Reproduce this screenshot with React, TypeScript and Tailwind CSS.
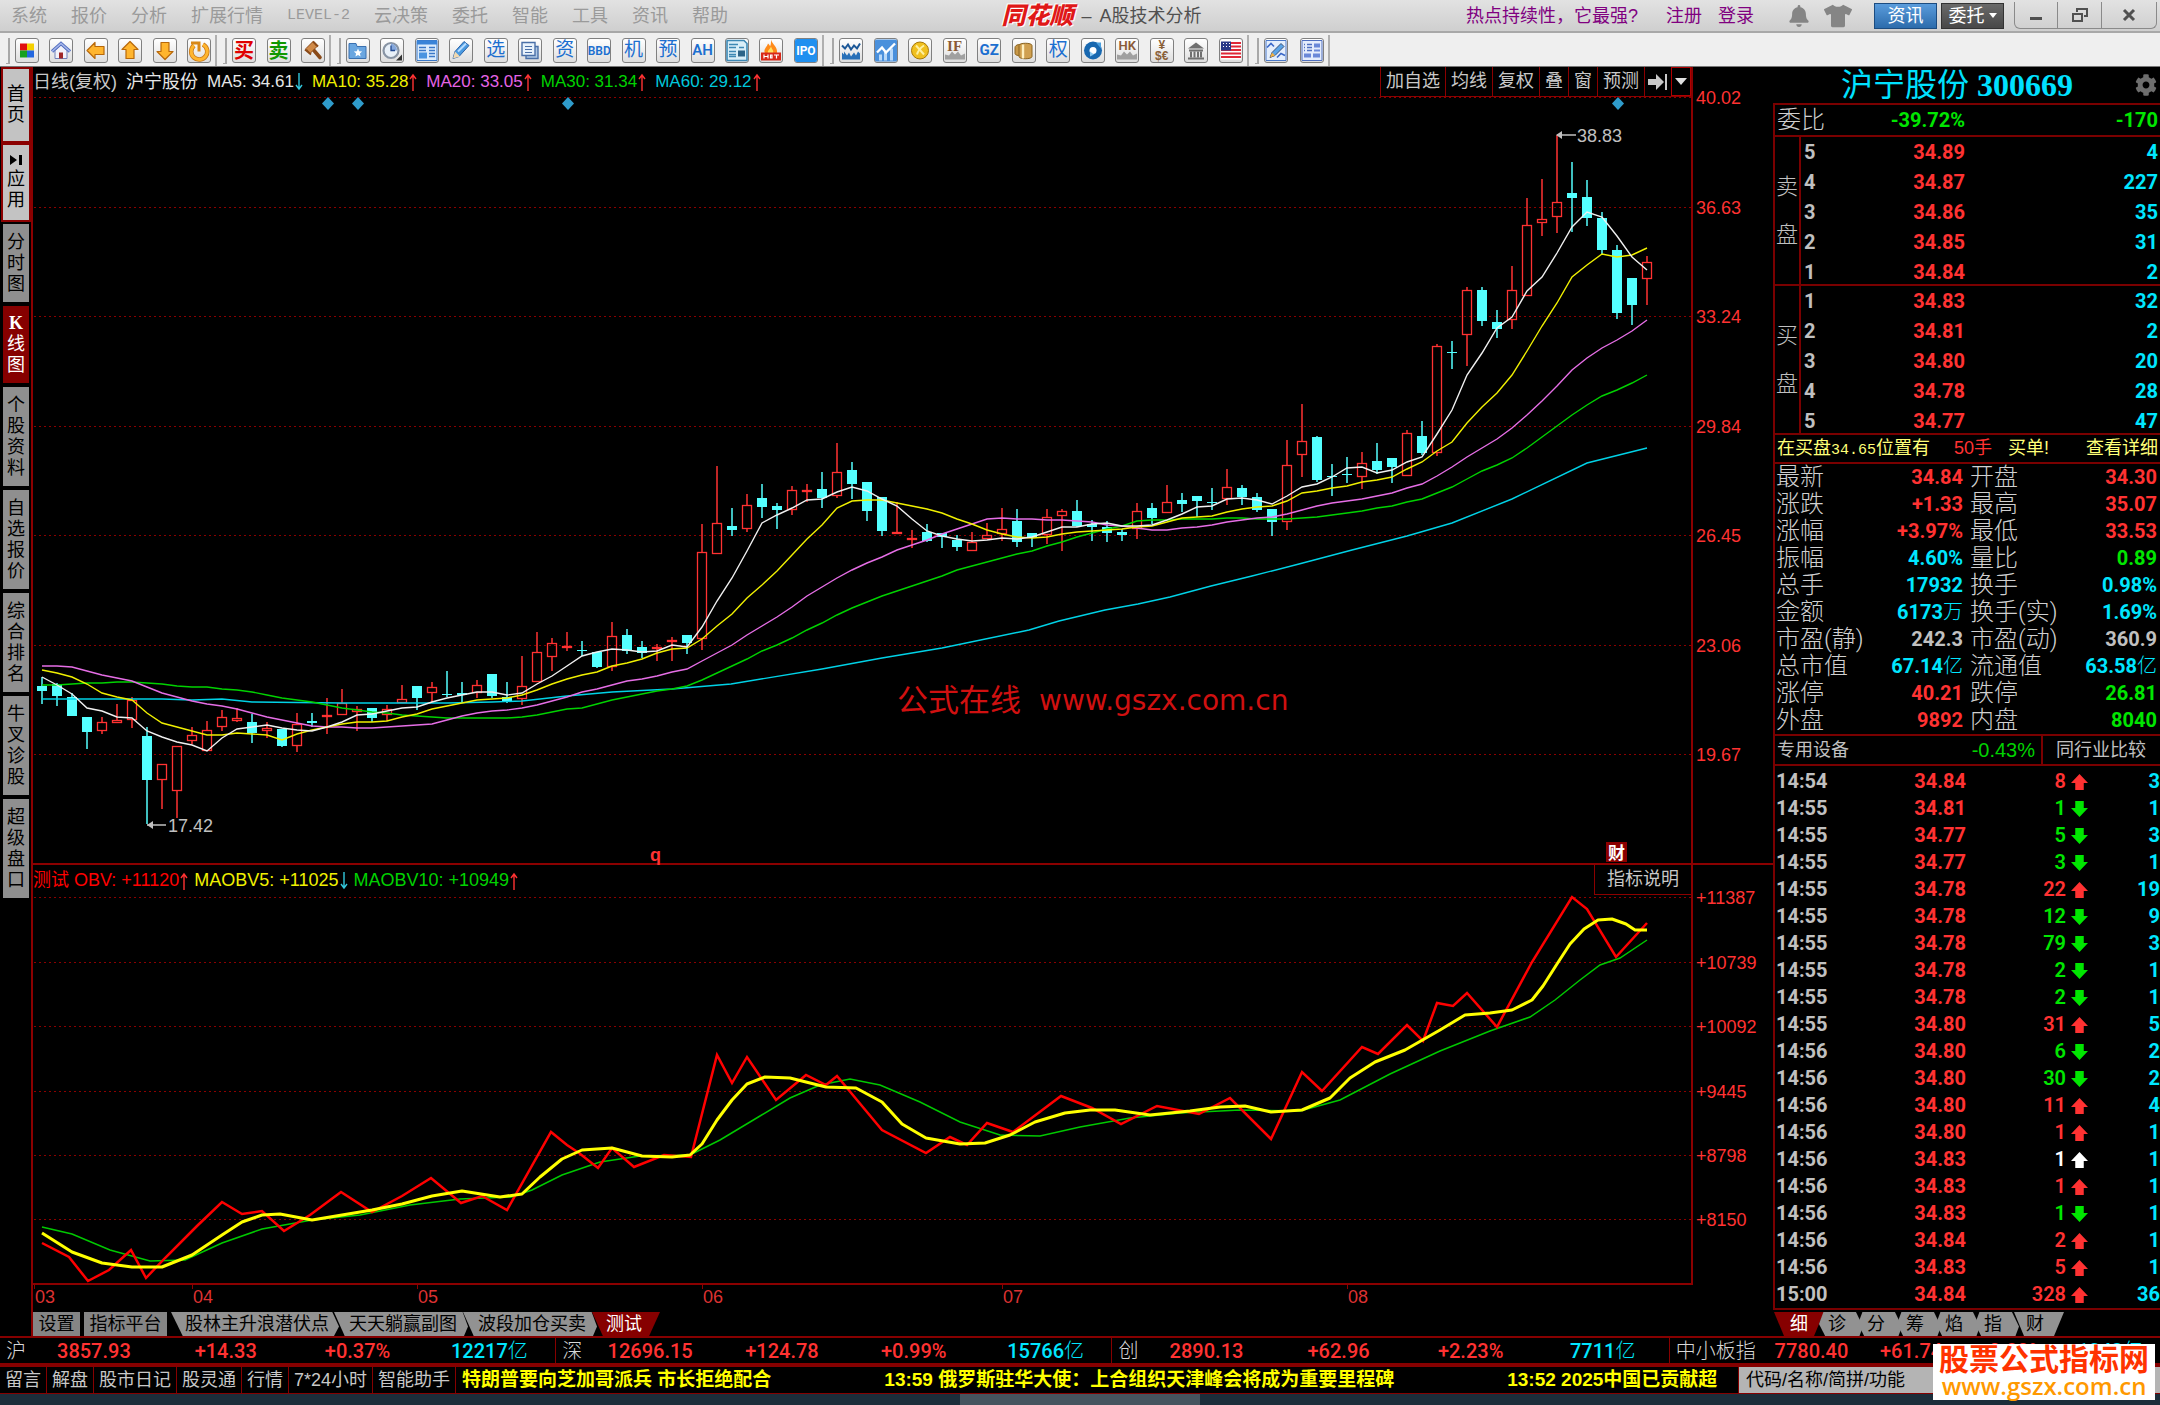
import React from 'react';
import { FaBell, FaTshirt, FaCog } from 'react-icons/fa';

const MENU = ['系统', '报价', '分析', '扩展行情', 'LEVEL-2', '云决策', '委托', '智能', '工具', '资讯', '帮助'];

const SIDE_TABS = [
    { text: '首页', h: 'h-[76px]', tone: 'bg-[#c3c3c3] text-black border-[#8b0000]' },
    { text: '应用', h: 'h-[79px]', tone: 'bg-[#c3c3c3] text-black border-[#8b0000]' },
    { text: '分时图', h: 'h-[82px]', tone: 'bg-[#8f8f8f] text-black border-black' },
    { text: '线图', h: 'h-[81px]', tone: 'bg-[#860000] text-white border-black' },
    { text: '个股资料', h: 'h-[103px]', tone: 'bg-[#8f8f8f] text-black border-black' },
    { text: '自选报价', h: 'h-[103px]', tone: 'bg-[#8f8f8f] text-black border-black' },
    { text: '综合排名', h: 'h-[103px]', tone: 'bg-[#8f8f8f] text-black border-black' },
    { text: '牛叉诊股', h: 'h-[103px]', tone: 'bg-[#8f8f8f] text-black border-black' },
    { text: '超级盘口', h: 'h-[103px]', tone: 'bg-[#8f8f8f] text-black border-black' },
];

// up flag, high, body top, body bottom, low (chart y units)
const CANDLES = [
    [0, 677, 686, 691, 704], [0, 683, 684, 696, 706], [0, 693, 697, 716, 716], [0, 717, 717, 732, 749],
    [1, 717, 722, 731, 734], [1, 704, 720, 723, 723], [1, 697, 700, 720, 728], [0, 727, 736, 780, 824],
    [1, 764, 764, 780, 809], [1, 746, 746, 791, 818], [1, 727, 735, 741, 744], [1, 721, 730, 751, 751],
    [1, 710, 717, 727, 731], [1, 708, 718, 721, 722], [0, 714, 722, 733, 743], [1, 722, 728, 731, 738],
    [0, 729, 729, 746, 747], [1, 713, 724, 746, 752], [0, 713, 721, 723, 727], [1, 698, 715, 716, 734],
    [1, 689, 703, 715, 715], [1, 706, 709, 712, 731], [0, 708, 708, 718, 722], [1, 705, 709, 715, 721],
    [1, 685, 699, 703, 703], [0, 686, 686, 698, 710], [1, 682, 687, 693, 702], [0, 671, 694, 695, 697],
    [0, 682, 693, 695, 702], [1, 680, 685, 693, 698], [0, 674, 674, 696, 698], [0, 682, 697, 702, 703],
    [1, 656, 686, 699, 705], [1, 632, 652, 682, 682], [1, 638, 643, 657, 671], [1, 632, 646, 648, 651],
    [0, 641, 650, 651, 656], [0, 652, 652, 667, 668], [1, 622, 636, 667, 671], [0, 629, 635, 651, 654],
    [0, 641, 647, 653, 658], [1, 644, 647, 648, 661], [1, 637, 640, 642, 661], [0, 635, 635, 643, 654],
    [1, 524, 552, 639, 650], [1, 466, 523, 554, 554], [0, 508, 526, 530, 536], [1, 494, 505, 529, 532],
    [0, 484, 498, 507, 518], [0, 503, 506, 510, 529], [1, 486, 490, 510, 515], [1, 484, 490, 492, 502],
    [0, 472, 489, 498, 508], [1, 443, 472, 496, 498], [0, 462, 470, 484, 499], [0, 482, 482, 511, 521],
    [0, 497, 497, 531, 536], [1, 502, 532, 533, 533], [1, 530, 538, 539, 548], [0, 524, 532, 541, 542],
    [0, 533, 533, 537, 548], [0, 535, 540, 547, 551], [1, 532, 542, 551, 551], [1, 523, 535, 539, 539],
    [1, 508, 529, 534, 541], [0, 509, 521, 542, 547], [0, 533, 533, 538, 547], [1, 509, 517, 535, 544],
    [1, 509, 511, 516, 551], [0, 500, 511, 526, 527], [0, 520, 524, 527, 541], [0, 521, 527, 533, 542],
    [0, 529, 532, 535, 541], [1, 503, 511, 529, 539], [0, 503, 508, 518, 524], [1, 485, 502, 513, 513],
    [0, 493, 500, 504, 512], [0, 496, 496, 501, 517], [0, 488, 502, 503, 510], [1, 469, 487, 499, 505],
    [0, 485, 488, 497, 505], [0, 493, 497, 510, 512], [0, 509, 509, 522, 536], [1, 440, 465, 522, 530],
    [1, 404, 441, 455, 477], [0, 436, 437, 480, 482], [0, 464, 476, 477, 496], [0, 457, 474, 475, 483],
    [1, 452, 463, 477, 489], [0, 443, 461, 470, 474], [0, 458, 458, 467, 483], [1, 430, 433, 476, 476],
    [0, 421, 436, 453, 455], [1, 344, 346, 453, 456], [0, 341, 352, 353, 369], [1, 287, 290, 335, 366],
    [0, 287, 290, 321, 326], [0, 310, 322, 329, 338], [1, 266, 290, 320, 329], [1, 198, 225, 296, 296],
    [1, 179, 219, 223, 236], [1, 135, 202, 217, 233], [0, 162, 193, 198, 232], [0, 180, 197, 218, 226],
    [0, 212, 218, 250, 254], [0, 245, 250, 313, 319], [0, 278, 278, 305, 325], [1, 256, 262, 279, 305],
];

const barX = (i: number) => Math.round(41.6 + i * 15);
const closes = CANDLES.map(([up, , top, bottom]) => (up ? top : bottom));

// moving average of the closes, with the bars before the window is full given by hand
const average = (n: number, seed: number[]) =>
    closes
        .map((_, i) => {
            const y = i < seed.length ? seed[i] : closes.slice(i - n + 1, i + 1).reduce((a, b) => a + b, 0) / n;
            return `${barX(i)},${Math.round(y)}`;
        })
        .join(' ');

const MA5 = average(5, [677, 685, 694, 708]);
const MA10 = average(10, [670, 673, 677, 684, 693, 697, 700, 713, 723]);
const MA20 = average(20, [666, 666, 667, 671, 675, 678, 681, 687, 693, 697, 701, 704, 706, 709, 713, 717, 720, 723, 726]);
const MA30 = average(30, [685, 685, 684, 683, 683, 682, 682, 683, 684, 686, 687, 687, 689, 690, 692, 695, 698, 700, 702, 705, 708, 710, 712, 713, 715, 716, 717, 718, 718]);
const MA60 = '42,699 162,699 192,700 222,699 252,702 342,703 447,703 492,702 522,701 567,696 612,692 672,689 731,684 822,669 882,658 942,648 1029,630 1059,621 1105,610 1138,604 1170,597 1211,586 1252,576 1299,564 1352,550 1407,536 1452,523 1512,499 1587,463 1647,448';

const OBV = '42,1243 69,1257 88,1281 109,1270 131,1250 146,1278 165,1258 197,1226 222,1202 242,1214 262,1211 284,1231 310,1215 341,1192 372,1212 402,1196 431,1178 461,1203 482,1196 507,1210 551,1132 567,1145 579,1153 598,1168 612,1148 634,1167 664,1155 691,1157 717,1055 732,1083 747,1057 776,1100 806,1075 826,1085 837,1076 882,1130 926,1153 950,1137 967,1145 987,1123 1013,1132 1061,1096 1092,1108 1121,1124 1157,1106 1199,1114 1230,1098 1271,1139 1302,1072 1322,1091 1362,1047 1378,1054 1407,1025 1423,1041 1437,1003 1453,1006 1467,993 1497,1027 1532,962 1572,897 1587,909 1616,957 1647,923';
const MAOBV5 = '42,1233 72,1252 102,1263 132,1267 162,1267 192,1255 222,1235 242,1222 262,1215 280,1214 312,1220 342,1215 372,1210 402,1204 432,1196 462,1191 500,1197 522,1194 540,1177 562,1159 582,1150 612,1148 642,1156 672,1157 690,1155 702,1144 717,1120 732,1100 747,1084 765,1077 790,1078 826,1087 856,1088 882,1102 902,1124 926,1138 960,1144 985,1143 1010,1135 1035,1122 1065,1113 1090,1110 1115,1110 1150,1115 1190,1111 1220,1107 1245,1106 1271,1112 1302,1110 1330,1098 1350,1078 1375,1062 1405,1050 1440,1030 1465,1015 1490,1013 1512,1010 1532,1000 1543,986 1557,964 1570,944 1584,929 1598,920 1612,919 1626,924 1635,930 1647,930';
const MAOBV10 = '42,1227 72,1234 110,1250 150,1261 185,1260 222,1243 262,1229 312,1220 360,1215 410,1205 460,1199 512,1197 532,1190 562,1175 600,1162 640,1156 690,1155 720,1140 760,1116 790,1098 820,1085 850,1079 880,1085 920,1102 960,1122 1000,1135 1040,1136 1080,1127 1130,1118 1180,1113 1240,1110 1300,1111 1340,1100 1390,1074 1440,1051 1490,1031 1530,1017 1555,1000 1580,980 1600,965 1620,958 1647,940';

const PRICE_GRID = [
    [97, '40.02'], [207, '36.63'], [316, '33.24'], [426, '29.84'], [535, '26.45'], [645, '23.06'], [754, '19.67'],
] as const;
const OBV_GRID = [
    [897, '+11387'], [962, '+10739'], [1026, '+10092'], [1091, '+9445'], [1155, '+8798'], [1219, '+8150'],
] as const;
const MONTHS = [[34, '03'], [192, '04'], [417, '05'], [702, '06'], [1002, '07'], [1347, '08']] as const;

const SELLS = [['5', '34.89', '4'], ['4', '34.87', '227'], ['3', '34.86', '35'], ['2', '34.85', '31'], ['1', '34.84', '2']];
const BUYS = [['1', '34.83', '32'], ['2', '34.81', '2'], ['3', '34.80', '20'], ['4', '34.78', '28'], ['5', '34.77', '47']];

const RED = 'text-[#ff3232]';
const GREEN = 'text-[#00e600]';
const CYAN = 'text-[#00e6ff]';
const GRAY = 'text-[#c0c0c0]';

const STATS = [
    ['最新', '34.84', RED, '开盘', '34.30', RED],
    ['涨跌', '+1.33', RED, '最高', '35.07', RED],
    ['涨幅', '+3.97%', RED, '最低', '33.53', RED],
    ['振幅', '4.60%', CYAN, '量比', '0.89', GREEN],
    ['总手', '17932', CYAN, '换手', '0.98%', CYAN],
    ['金额', '6173万', CYAN, '换手(实)', '1.69%', CYAN],
    ['市盈(静)', '242.3', GRAY, '市盈(动)', '360.9', GRAY],
    ['总市值', '67.14亿', CYAN, '流通值', '63.58亿', CYAN],
    ['涨停', '40.21', RED, '跌停', '26.81', GREEN],
    ['外盘', '9892', RED, '内盘', '8040', GREEN],
];

const TRADES = [
    ['14:54', '34.84', '8', 'up', '3'], ['14:55', '34.81', '1', 'down', '1'], ['14:55', '34.77', '5', 'down', '3'],
    ['14:55', '34.77', '3', 'down', '1'], ['14:55', '34.78', '22', 'up', '19'], ['14:55', '34.78', '12', 'down', '9'],
    ['14:55', '34.78', '79', 'down', '3'], ['14:55', '34.78', '2', 'down', '1'], ['14:55', '34.78', '2', 'down', '1'],
    ['14:55', '34.80', '31', 'up', '5'], ['14:56', '34.80', '6', 'down', '2'], ['14:56', '34.80', '30', 'down', '2'],
    ['14:56', '34.80', '11', 'up', '4'], ['14:56', '34.80', '1', 'up', '1'], ['14:56', '34.83', '1', 'flat', '1'],
    ['14:56', '34.83', '1', 'up', '1'], ['14:56', '34.83', '1', 'down', '1'], ['14:56', '34.84', '2', 'up', '1'],
    ['14:56', '34.83', '5', 'up', '1'], ['15:00', '34.84', '328', 'up', '36'],
];
const TRADE_TONE: Record<string, string> = { up: RED, down: GREEN, flat: 'text-white' };

const INDEXES = [
    { name: '沪', cells: ['3857.93', '+14.33', '+0.37%', '12217亿'], grow: 'flex-[556]', label: 'w-[28px]' },
    { name: '深', cells: ['12696.15', '+124.78', '+0.99%', '15766亿'], grow: 'flex-[556]', label: 'w-[28px]' },
    { name: '创', cells: ['2890.13', '+62.96', '+2.23%', '7711亿'], grow: 'flex-[557]', label: 'w-[28px]' },
    { name: '中小板指', cells: ['7780.40', '+61.74', '+0.80%', '1243亿'], grow: 'flex-[491]', label: 'w-[92px]' },
];

const FOOT_LINKS = ['留言', '解盘', '股市日记', '股灵通', '行情', '7*24小时', '智能助手'];

const Glyph = ({ text, className }: { text: string; className: string }) => (
    <span className={`flex h-full w-full items-center justify-center ${className}`}>{text}</span>
);

const Ico = ({ children }: { children: React.ReactNode }) => (
    <svg viewBox="0 0 22 22" className="h-full w-full" fill="none">{children}</svg>
);

// figures are bold, the unit after them is thin
const Figure = ({ value }: { value: string }) => {
    const unit = value.match(/[万亿]$/);
    if (!unit) return <>{value}</>;
    return <>{value.slice(0, -1)}<span className="font-light">{unit[0]}</span></>;
};

const HAN = 'text-[19px] text-[#1c6fd0]';
const ARROW = { fill: '#ffb52e', stroke: '#b8680a', strokeWidth: 1.2, strokeLinejoin: 'round' as const };

const TOOLS = [
    {
        width: 'w-[196px]',
        items: [
            ['板块', <Ico><path d="M4 4h7v7H4z" fill="#e01010" /><path d="M11 4h7v7h-7z" fill="#f5d000" /><path d="M4 11h7v7H4z" fill="#18a020" /><path d="M11 11h7v7h-7z" fill="#2468e0" /></Ico>],
            ['主页', <Ico><path d="M5 11v8h12v-8l-6-6z" fill="#f2f2fa" stroke="#7080b8" /><path d="M2 12 11 4l9 8" stroke="#5570c0" strokeWidth="3.4" /><path d="M2 12 11 4l9 8" stroke="#a8b8ec" strokeWidth="1.4" /><path d="M9 13h4v6H9z" fill="#a02828" /></Ico>],
            ['后退', <Ico><path d="M2 11 10 3v4h9v8h-9v4z" {...ARROW} /></Ico>],
            ['上翻', <Ico><path d="M11 2 19 10h-4v9H7v-9H3z" {...ARROW} /></Ico>],
            ['下翻', <Ico><path d="M11 20 19 12h-4V3H7v9H3z" {...ARROW} /></Ico>],
            ['刷新', <Ico><path d="M15 5a8 8 0 1 1-9 1" stroke="#c87818" strokeWidth="4.600" /><path d="M15 5a8 8 0 1 1-9 1" stroke="#ffb52e" strokeWidth="3" /><path d="M11 12V3.500H3" stroke="#d88818" strokeWidth="3" /></Ico>],
        ],
    },
    {
        width: 'w-[93px]',
        items: [
            ['买入', <Glyph text="买" className="text-[20px] font-bold text-[#e00000]" />],
            ['卖出', <Glyph text="卖" className="text-[20px] font-bold text-[#109800]" />],
            ['委托锤', <Ico><path d="m12 11 6 7" stroke="#8a4a18" strokeWidth="3.600" strokeLinecap="round" /><path d="m4 9 7-7 4 5-7 7z" fill="#d08a48" stroke="#8a4a18" /><path d="m3 10 6 5M11 2l5 5" stroke="#8a4a18" strokeWidth="2" /></Ico>],
        ],
    },
    {
        width: 'w-[472px]',
        items: [
            ['自选', <Ico><path d="M2 4h7l1 3h9v12H2z" fill="#6aa6e0" stroke="#3a70b0" /><path d="m11 9 1.200 2.800 3 .2-2.300 2 .7 3-2.600-1.600L8.400 17l.7-3-2.300-2 3-.2z" fill="#fff" /></Ico>],
            ['历史', <Ico><circle cx="10" cy="11" r="7.500" fill="#e8f0f8" stroke="#8894a4" strokeWidth="2.200" /><path d="M10 11V4a7 7 0 0 1 6 7z" fill="#86a8dc" /><path d="M10 6v5h4" stroke="#204890" strokeWidth="1.300" /><path d="M15 21h6v-6z" fill="#333" /></Ico>],
            ['报表', <Ico><path d="M1 1h20v20H1z" fill="#dcecfc" stroke="#3a78c8" /><path d="M1 1h20v4H1z" fill="#3a84d8" /><path d="M3 8h7M3 11h7M13 8h6M13 11h6M13 14h6M13 17h6" stroke="#3a78c8" strokeWidth="1.600" /><path d="M3 13h8v6H3z" fill="#4a94e0" /></Ico>],
            ['画线', <Ico><path d="m3 19 2-7L14 2l5 4-10 11z" fill="#4a9ae0" stroke="#2a62a8" /><path d="m3 19 2-7 5 5z" fill="#f0d8b0" /><path d="m8 12 8-8" stroke="#b8dcff" strokeWidth="2" /></Ico>],
            ['选股', <Glyph text="选" className={HAN} />],
            ['多窗', <Ico><path d="M7 7h12v12H7z" fill="#b0c8e4" stroke="#4a70a8" strokeWidth="1.400" /><path d="M3 3h13v13H3z" fill="#e8f2fc" stroke="#4a70a8" strokeWidth="1.400" /><path d="M6 7h7M6 10h7M6 13h7" stroke="#4a70a8" /></Ico>],
            ['资金', <Glyph text="资" className={HAN} />],
            ['大单', <Glyph text="BBD" className="font-['Roboto'] text-[12px] font-semibold text-[#1c6fd0]" />],
            ['机构', <Glyph text="机" className={HAN} />],
            ['预测', <Glyph text="预" className={HAN} />],
            ['AH股', <Glyph text="AH" className="font-['Roboto'] text-[15px] font-semibold text-[#1c6fd0]" />],
            ['新闻', <Ico><path d="M1 1h17l3 3v17H1z" fill="#d8eef8" stroke="#3c88b4" strokeWidth="1.600" /><path d="M3 5h9M3 8h7M13 8h5M3 12h7M3 15h7M3 17h7" stroke="#3c88b4" strokeWidth="1.400" /><path d="M12 11h7v6h-7z" fill="#2c6488" /></Ico>],
            ['热点', <Ico><path d="M11 0c1 5 7 7 6 14H5C3 9 7 8 8 4c1 1 2 2 2 3 1-2 1-4 1-7z" fill="#ff8a18" /><path d="M11 7c1 3 3 4 2 7H8c-1-3 2-4 3-7z" fill="#ffe060" /><path d="M1 13h20v8H1z" fill="#d82818" /><path d="M4 15v4M8 15v4M4 17h4M12 15.500h-1.500v3H12zM14 15.500h5M16.500 15.500V19" stroke="#fff" strokeWidth="1.200" /></Ico>],
            ['新股', <Glyph text="IPO" className="bg-[#2090f0] font-['Roboto'] text-[12px] font-bold text-white" />],
        ],
    },
    {
        width: 'w-[404px]',
        items: [
            ['大盘', <Ico><path d="m2 6 3 3 3-4 3 5 3-4 3 3 3-5" stroke="#1c5898" strokeWidth="2" /><path d="M2 20v-7l2 2v-3l3 4 2-3 2 4 3-4 2 3 2-4 2 2v6z" fill="#2870b8" /></Ico>],
            ['走势', <Ico><path d="M0 0h22v22H0z" fill="#4a90dc" /><path d="M4 21v-6h3v6M9 21v-9h3v9M15 21V9h3v12" fill="#b8d8f8" /><path d="m2 13 5-5 4 5 9-9" stroke="#fff" strokeWidth="2.400" /></Ico>],
            ['期货', <Ico><circle cx="11" cy="11" r="8.500" fill="#f0c020" stroke="#a87808" /><path d="m7 6 8 9M15 6c-3 2-6 5-7 9" stroke="#fff0a0" strokeWidth="2" /></Ico>],
            ['股指', <span className="relative flex h-full w-full justify-center"><Ico><path d="M1 20v-5l4 1 3-4 3 3 3-3 3 4 4-2v6z" fill="#a0a0a0" /></Ico><span className="absolute top-0 font-['Liberation_Serif'] text-[15px] leading-[14px] font-bold text-[#8a5a38]">IF</span></span>],
            ['国债', <Glyph text="GZ" className="font-['Roboto'] text-[15px] font-bold text-[#1c6fd0]" />],
            ['商品', <Ico><path d="M2 8c0-3 6-4 8-2v9c-2 2-8 1-8-1z" fill="#c89848" stroke="#8a6420" /><path d="M6 6c0-3 13-3 13 0v11c0 3-13 3-13 0z" fill="#d0a050" stroke="#8a6420" /><path d="M10 5v14" stroke="#fff0c0" strokeWidth="2.400" /></Ico>],
            ['权证', <Glyph text="权" className={HAN} />],
            ['基金', <Ico><circle cx="11" cy="11" r="9" fill="#1868b0" /><circle cx="11" cy="11" r="3.500" fill="#fff" /><path d="M14 3h5v6" fill="#4aa0e0" /><path d="m8 17 4-2-4-3z" fill="#8ac8f0" /></Ico>],
            ['港股', <span className="relative flex h-full w-full justify-center"><Ico><path d="M1 20v-5l4 1 3-4 3 3 3-3 3 4 4-2v6z" fill="#a0a0a0" /></Ico><span className="absolute top-0 font-['Roboto'] text-[13px] leading-[14px] font-semibold text-[#8a5a38]">HK</span></span>],
            ['外汇', <span className="flex h-full flex-col items-center justify-center font-['Liberation_Sans'] text-[12px] leading-[11px] font-bold text-[#8a6038]"><span>¥</span><span>$€</span></span>],
            ['银行', <Ico><path d="M3 9 11 3l8 6zM4 10h14v2H4zM3 18h16v2H3z" fill="#707070" /><path d="M6 12v6M9.500 12v6M13 12v6M16 12v6" stroke="#707070" strokeWidth="2" /></Ico>],
            ['美股', <Ico><path d="M1 2h20v18H1z" fill="#fff" /><path d="M1 3.500h20M1 7h20M1 10.500h20M1 14h20M1 17.500h20" stroke="#e02838" strokeWidth="1.800" /><path d="M1 2h10v9H1z" fill="#283888" /><path d="M3 4h1M6 4h1M9 4h1M3 7h1M6 7h1M9 7h1" stroke="#fff" /></Ico>],
        ],
    },
    {
        width: 'w-[60px]',
        items: [
            ['编辑公式', <Ico><path d="M1 1h20v20H1z" fill="#e4eefc" stroke="#4a78c8" /><path d="m2 8 4-4 3 3M12 18l4-4 4 2" stroke="#3a68c8" strokeWidth="1.600" /><path d="m5 18 2-5 9-9 3 3-9 9z" fill="#5aa4e8" stroke="#385078" /><path d="m5 18 2-5 3 3z" fill="#f4b040" /></Ico>],
            ['版面', <Ico><path d="M1 1h20v20H1z" fill="#e4ecfc" stroke="#5070c0" /><path d="M3 5h1M6 5h5M3 8h1M6 8h5M3 11h1M6 11h5" stroke="#5070c0" strokeWidth="1.600" /><path d="M13 4h6v4h-6zM13 10h6v2h-6zM3 14h7v4H3zM12 14h7v4h-7z" fill="#6a88d8" /></Ico>],
        ],
    },
];

const Trend = ({ up }: { up: boolean }) => (
    <svg viewBox="0 0 8 18" className="ml-px h-[18px] w-2" fill="none" stroke={up ? '#ff3232' : '#32c8dc'} strokeWidth="1.4">
        {up ? <path d="M4 18V2M1 6l3-4 3 4" /> : <path d="M4 0v16M1 12l3 4 3-4" />}
    </svg>
);

const TitleBar = () => (
    <header className="flex h-[33px] items-center border-b-2 border-[#a8a8a8] bg-gradient-to-b from-[#e2e2e2] to-[#cfcfcf] text-[18px] leading-[18px] whitespace-nowrap">
        <nav className="flex flex-1 items-center gap-6 pl-[11px] text-[#9a9a9a]">
            {MENU.map((m) => (
                <button key={m} className={m === 'LEVEL-2' ? "font-['Liberation_Mono'] text-[15px]" : ''}>{m}</button>
            ))}
        </nav>
        <div className="flex items-center gap-2 pl-8 text-[#505050]">
            <span className="text-[24px] leading-[28px] font-black text-[#e01818] italic [text-shadow:1px_1px_0_#fff,-1px_-1px_0_#fff]">同花顺</span>
            <span>–</span>
            <h1>A股技术分析</h1>
        </div>
        <div className="flex flex-1 items-center justify-end text-[#800080]">
            <a href="#hot">热点持续性，它最强?</a>
            <a href="#join" className="ml-7">注册</a>
            <a href="#login" className="ml-4">登录</a>
            <button aria-label="消息" className="ml-[34px] text-[#858585]"><FaBell size={22} /></button>
            <button aria-label="换肤" className="ml-[14px] text-[#858585]"><FaTshirt size={28} /></button>
            <button className="ml-[22px] h-[26px] w-[63px] border border-[#1c4c80] bg-gradient-to-b from-[#5a9cdc] to-[#2c6cac] text-white">资讯</button>
            <button className="ml-1 flex h-[26px] w-[63px] items-center justify-center gap-1 border border-[#333] bg-gradient-to-b from-[#6a6a6a] to-[#484848] text-white">
                委托
                <svg viewBox="0 0 8 5" className="h-[5px] w-2"><path d="M0 0h8L4 5z" fill="#fff" /></svg>
            </button>
            <div className="mr-[3px] ml-[10px] flex h-[27px] divide-x divide-[#8a8a8a] rounded-b-md border border-t-0 border-[#8a8a8a]">
                <button aria-label="最小化" className="flex w-[43px] items-center justify-center">
                    <svg viewBox="0 0 16 16" className="size-4"><path d="M2 10h12v3H2z" fill="#505050" /></svg>
                </button>
                <button aria-label="还原" className="flex w-[44px] items-center justify-center">
                    <svg viewBox="0 0 16 16" className="size-4" fill="none" stroke="#505050" strokeWidth="2"><path d="M1 7h9v7H1zM5 5V2h10v7h-3" /></svg>
                </button>
                <button aria-label="关闭" className="flex w-[54px] items-center justify-center">
                    <svg viewBox="0 0 16 16" className="size-4" fill="none" stroke="#505050" strokeWidth="3"><path d="m3 3 10 10M13 3 3 13" /></svg>
                </button>
            </div>
        </div>
    </header>
);

const Toolbar = () => (
    <div className="flex h-[34px] items-end border-b border-[#777] bg-[#efefef]">
        {TOOLS.map((group, i) => (
            <div key={i} className="flex h-[31px] items-center border-r-2 border-[#b0b0b0] pr-[4px]">
                <span className="mr-[5px] ml-[6px] h-[26px] w-[4px] border-r-2 border-b border-[#a8a8a8]" />
                <div className={`flex justify-between ${group.width}`}>
                    {group.items.map(([name, icon]) => (
                        <button
                            key={name as string}
                            aria-label={name as string}
                            className="flex h-[25px] w-6 items-center justify-center overflow-hidden rounded-[3px] border border-[#808080] bg-gradient-to-b from-white to-[#dedede]"
                        >
                            {icon}
                        </button>
                    ))}
                </div>
            </div>
        ))}
    </div>
);

const SideNav = () => (
    <nav className="flex w-[33px] shrink-0 flex-col border-r-2 border-[#8b0000] bg-black pl-px text-[18px]">
        {SIDE_TABS.map((tab) => (
            <button key={tab.text} className={`flex flex-col items-center justify-center border-2 leading-[21px] ${tab.h} ${tab.tone}`}>
                {tab.text === '应用' && (
                    <svg viewBox="0 0 12 10" className="mb-1 h-[10px] w-3"><path d="M0 0v10l7-5zM9 0h3v10H9z" fill="#000" /></svg>
                )}
                {tab.text === '线图' && <span className="font-['Liberation_Serif'] text-[18px] font-bold">K</span>}
                <span className="w-[18px] break-all">{tab.text}</span>
            </button>
        ))}
    </nav>
);

const PriceChart = () => (
    <svg viewBox="33 97 1740 768" className="block w-full overflow-visible font-['Liberation_Sans','Noto_Sans_CJK_SC',sans-serif] text-[18px]" fill="none">
        {PRICE_GRID.map(([y, label]) => (
            <g key={label}>
                <path d={`M34 ${y + 0.5}H1692`} stroke="#8b0000" strokeDasharray="2 3" />
                <text x="1696" y={y + 7} fill="#ff3232">{label}</text>
            </g>
        ))}
        <path d="M1692 97V865M33 864H1773" stroke="#8b0000" strokeWidth="2" />
        {[328, 358, 568, 1618].map((x) => (
            <path key={x} d={`M${x} 97l6 6.500-6 6.500-6-6.500z`} fill="#2f9bcb" />
        ))}
        {CANDLES.map(([up, high, top, bottom, low], i) => {
            const x = barX(i);
            return up ? (
                <g key={i} stroke="#ff3232">
                    <path d={`M${x} ${high}V${top}M${x} ${bottom}V${low}`} strokeWidth="1.500" />
                    <rect x={x - 4.5} y={top + 0.5} width="9" height={Math.max(bottom - top - 1, 1)} strokeWidth="1.300" />
                </g>
            ) : (
                <g key={i}>
                    <path d={`M${x} ${high}V${low}`} stroke="#54ffff" strokeWidth="1.500" />
                    <rect x={x - 5} y={top} width="10" height={bottom - top} fill="#54ffff" />
                </g>
            );
        })}
        <polyline points={MA60} stroke="#00d2e6" strokeWidth="1.400" />
        <polyline points={MA30} stroke="#00d200" strokeWidth="1.400" />
        <polyline points={MA20} stroke="#e66ee6" strokeWidth="1.400" />
        <polyline points={MA10} stroke="#f0f000" strokeWidth="1.400" />
        <polyline points={MA5} stroke="#f0f0f0" strokeWidth="1.400" />
        <path d="M1557 135h19M147 825h19" stroke="#c0c0c0" strokeWidth="1.500" />
        <path d="m1556 135 6-4v8zM147 825l6-4v8z" fill="#c0c0c0" />
        <text x="1577" y="142" fill="#c0c0c0">38.83</text>
        <text x="168" y="832" fill="#c0c0c0">17.42</text>
        <text x="897" y="711" fill="#d01010" fontSize="31">公式在线</text>
        <text x="1039" y="710" fill="#d01010" fontSize="28" fontFamily="DejaVu Sans">www.gszx.com.cn</text>
        <text x="650" y="861" fill="#ff3232" fontWeight="bold">q</text>
        <rect x="1606" y="842" width="21" height="20" fill="#8b0000" />
        <text x="1608" y="859" fill="#fff" fontSize="17" fontWeight="bold">财</text>
    </svg>
);

const ObvChart = () => (
    <svg viewBox="33 896 1740 416" className="block w-full overflow-visible font-['Liberation_Sans',sans-serif] text-[18px]" fill="none">
        {OBV_GRID.map(([y, label]) => (
            <g key={label}>
                <path d={`M34 ${y + 0.5}H1692`} stroke="#8b0000" strokeDasharray="2 3" />
                <text x="1696" y={y + 7} fill="#ff3232">{label}</text>
            </g>
        ))}
        <path d="M1692 896V1284H33" stroke="#8b0000" strokeWidth="2" />
        {MONTHS.map(([x, label]) => (
            <g key={label}>
                <path d={`M${x + 0.5} 1284v5`} stroke="#8b0000" />
                <text x={x + 1} y="1303" fill="#dc3232">{label}</text>
            </g>
        ))}
        <polyline points={MAOBV10} stroke="#00c800" strokeWidth="1.500" />
        <polyline points={OBV} stroke="#ff0000" strokeWidth="2.500" />
        <polyline points={MAOBV5} stroke="#ffff00" strokeWidth="3" strokeLinejoin="round" />
    </svg>
);

const FormulaTabs = () => (
    <div className="flex h-6 items-start text-[18px] leading-[24px] text-black">
        <button className="h-6 w-[47px] bg-[#858585]">设置</button>
        <button className="ml-1 h-6 w-[83px] bg-[#858585]">指标平台</button>
        <button className="ml-1 h-6 w-[168px] bg-[#929292] pl-1 [clip-path:polygon(0_0,96%_0,100%_60%,97%_100%,7%_100%)]">股林主升浪潜伏点</button>
        <button className="-ml-[5px] h-6 w-[134px] bg-[#929292] pl-1 [clip-path:polygon(0_0,96%_0,100%_60%,97%_100%,8%_100%)]">天天躺赢副图</button>
        <button className="-ml-[5px] h-6 w-[134px] bg-[#929292] pl-1 [clip-path:polygon(0_0,96%_0,100%_60%,97%_100%,8%_100%)]">波段加仓买卖</button>
        <button className="-ml-[5px] h-6 w-[68px] bg-[#860000] pr-1 text-white [clip-path:polygon(0_0,100%_0,84%_100%,16%_100%)]">测试</button>
    </div>
);

const CHART_BUTTONS = ['加自选', '均线', '复权', '叠', '窗', '预测'];

const Charts = () => (
    <main className="min-w-0 flex-1">
        <div className="mr-20 flex h-[30px] items-stretch justify-between border-r-2 border-[#8b0000] whitespace-nowrap">
            <div className="flex items-center gap-[9px] text-[17px]">
                <span className="text-[18px] text-[#c8c8c8]">日线(复权)</span>
                <span className="text-[18px] text-[#e6e6e6]">沪宁股份</span>
                <span className="flex items-center text-[#e6e6e6]">MA5: 34.61<Trend up={false} /></span>
                <span className="flex items-center text-[#f0f000]">MA10: 35.28<Trend up /></span>
                <span className="flex items-center text-[#e664e6]">MA20: 33.05<Trend up /></span>
                <span className="flex items-center text-[#00d200]">MA30: 31.34<Trend up /></span>
                <span className="flex items-center text-[#00c8dc]">MA60: 29.12<Trend up /></span>
            </div>
            <div className="flex border-b border-[#8b0000] text-[18px] text-[#c8c8c8]">
                {CHART_BUTTONS.map((b) => (
                    <button key={b} className="border-l border-[#8b0000] px-[5px]">{b}</button>
                ))}
                <button aria-label="最新" className="border-l border-[#8b0000] px-[3px]">
                    <svg viewBox="0 0 20 18" className="h-[18px] w-5"><path d="M0 6h8V1l8 8-8 8v-5H0zM17 1h2v16h-2z" fill="#c8c8c8" /></svg>
                </button>
                <button aria-label="更多" className="border border-[#b00000] px-[3px]">
                    <svg viewBox="0 0 12 7" className="h-[7px] w-3"><path d="M0 0h12L6 7z" fill="#e0e0e0" /></svg>
                </button>
            </div>
        </div>
        <PriceChart />
        <div className="mr-20 flex h-[31px] justify-between border-r-2 border-[#8b0000] text-[18px] whitespace-nowrap">
            <div className="flex items-center gap-[6px]">
                <span className="flex items-center text-[#ff0000]">测试 OBV: +11120<Trend up /></span>
                <span className="flex items-center text-[#f0f000]">MAOBV5: +11025<Trend up={false} /></span>
                <span className="flex items-center text-[#00d200]">MAOBV10: +10949<Trend up /></span>
            </div>
            <button className="h-[30px] border-b border-l border-[#8b0000] px-3 text-[18px] text-[#c8c8c8]">指标说明</button>
        </div>
        <ObvChart />
        <FormulaTabs />
    </main>
);

const Book = ({ side, rows }: { side: string; rows: string[][] }) => (
    <div className="flex border-b-2 border-[#7a0000]">
        <div className="flex w-[26px] flex-col items-center justify-center gap-6 border-r-2 border-[#7a0000] text-[22px] leading-6 font-light text-[#c0c0c0]">
            <span>{side}</span>
            <span>盘</span>
        </div>
        <table className="-mb-[3px] flex-1 table-fixed font-['Roboto'] text-[20px] leading-[30px] font-bold">
            <tbody>
                {rows.map(([n, price, vol]) => (
                    <tr key={n} className="h-[30px]">
                        <td className="w-[40px] p-0 pl-[3px] text-[#c0c0c0]">{n}</td>
                        <td className={`w-[124px] p-0 text-right ${RED}`}>{price}</td>
                        <td className={`p-0 pr-[2px] text-right ${CYAN}`}>{vol}</td>
                    </tr>
                ))}
            </tbody>
        </table>
    </div>
);

const QuotePanel = () => (
    <aside className="flex w-[387px] shrink-0 flex-col whitespace-nowrap">
        <div className="flex h-[36px] items-center justify-between pr-[3px] pl-[68px]">
            <h2 className="font-['Liberation_Serif','Noto_Sans_CJK_SC',serif] text-[32px] leading-[36px] font-bold text-[#00e1ff]">
                <span className="font-normal">沪宁股份</span> 300669
            </h2>
            <button aria-label="设置" className="text-[#6e6e6e]"><FaCog size={22} /></button>
        </div>
        <div className="border-y-2 border-l-2 border-[#7a0000]">
            <div className="flex h-[32px] items-center border-b-2 border-[#7a0000] px-[2px] font-['Roboto','Noto_Sans_CJK_SC'] text-[20px] font-bold text-[#00e600]">
                <span className="w-[48px] text-[24px] leading-[30px] font-light text-[#d0d0d0]">委比</span>
                <span className="w-[140px] text-right">-39.72%</span>
                <span className="flex-1 text-right">-170</span>
            </div>
            <Book side="卖" rows={SELLS} />
            <Book side="买" rows={BUYS} />
            <div className="flex h-[29px] items-center border-b-2 border-[#7a0000] px-[2px] text-[18px] text-[#ffff78]">
                <span>在买盘<span className="font-['Liberation_Mono'] text-[15px]">34.65</span>位置有</span>
                <span className="ml-6 text-[#ff3232]">50手</span>
                <span className="ml-4">买单!</span>
                <a href="#detail" className="ml-auto">查看详细</a>
            </div>
            <div className="font-['Roboto','Noto_Sans_CJK_SC',sans-serif]">
                {STATS.map(([a, av, at, b, bv, bt]) => (
                    <div key={a} className="flex h-[27px] items-center pr-[3px] pl-px text-[20px] leading-[27px] font-bold">
                        <span className="w-[84px] text-[24px] font-light text-[#d0d0d0]">{a}</span>
                        <span className={`w-[103px] text-right ${at}`}><Figure value={av} /></span>
                        <span className="ml-[7px] w-[84px] text-[24px] font-light text-[#d0d0d0]">{b}</span>
                        <span className={`flex-1 text-right ${bt}`}><Figure value={bv} /></span>
                    </div>
                ))}
            </div>
            <div className="flex h-[32px] items-stretch border-y-2 border-[#7a0000] pl-[2px] text-[18px] leading-[28px] text-[#c0c0c0]">
                <span>专用设备</span>
                <span className="flex-1 pr-[6px] text-right text-[20px] text-[#00d200]">-0.43%</span>
                <a href="#peers" className="w-[119px] border-l-2 border-[#7a0000] pl-[13px]">同行业比较</a>
            </div>
            <table className="mt-[2px] w-full table-fixed font-['Roboto'] text-[20px] font-bold">
                <tbody>
                    {TRADES.map(([time, price, vol, dir, n], i) => (
                        <tr key={i} className="h-[27px] leading-[27px]">
                            <td className="w-[90px] p-0 pl-px text-[#c0c0c0]">{time}</td>
                            <td className={`w-[101px] p-0 text-right ${RED}`}>{price}</td>
                            <td className={`p-0 text-right font-semibold ${TRADE_TONE[dir]}`}>{vol}</td>
                            <td className={`w-[28px] p-0 pl-[5px] ${TRADE_TONE[dir]}`}>
                                <svg viewBox="0 0 16 16" className="h-4 w-[17px]" preserveAspectRatio="none">
                                    <path d={dir === 'down' ? 'M4 0h8v7h4l-8 9-8-9h4z' : 'M4 16h8V9h4L8 0 0 9h4z'} fill="currentColor" />
                                </svg>
                            </td>
                            <td className={`w-[66px] p-0 text-right ${CYAN}`}>{n}</td>
                        </tr>
                    ))}
                </tbody>
            </table>
        </div>
        <div className="mt-auto flex h-[24px] pl-px text-[18px] leading-[24px] text-black">
            <button className="w-[50px] bg-[#860000] text-white [clip-path:polygon(0_0,100%_0,80%_100%,20%_100%)]">细</button>
            {['诊', '分', '筹', '焰', '指'].map((t) => (
                <button key={t} className="-ml-[5px] w-[44px] bg-[#929292] pr-2 [clip-path:polygon(10%_0,84%_0,100%_60%,92%_100%,14%_100%,0_50%)]">{t}</button>
            ))}
            <button className="-ml-[5px] w-[50px] bg-[#929292] pr-2 [clip-path:polygon(0_0,100%_0,80%_100%,20%_100%)]">财</button>
        </div>
    </aside>
);

const IndexBar = () => (
    <div className="flex h-[31px] border-t-2 border-b-4 border-[#860000] font-['Roboto','Noto_Sans_CJK_SC',sans-serif] text-[20px] leading-[26px] whitespace-nowrap">
        {INDEXES.map((idx) => (
            <div key={idx.name} className={`flex border-r border-[#860000] last:border-r-0 ${idx.grow}`}>
                <span className={`pl-[6px] font-light text-[#d8d8d8] ${idx.label}`}>{idx.name}</span>
                {idx.cells.map((cell, i) => (
                    <span key={cell} className={`flex-1 text-center font-medium ${i === 3 ? CYAN : RED}`}><Figure value={cell} /></span>
                ))}
            </div>
        ))}
    </div>
);

const Ticker = () => (
    <div className="flex h-[27px] items-stretch border-b border-[#860000] text-[18px] leading-[26px] whitespace-nowrap">
        <nav className="flex text-[#c8c8c8]">
            {FOOT_LINKS.map((link) => (
                <a key={link} href="#link" className="border-r border-[#860000] px-[5px]">{link}</a>
            ))}
        </nav>
        <div className="flex min-w-0 flex-1 gap-[113px] overflow-hidden pl-[6px] text-[19px] font-bold text-[#ffff00]">
            <span>特朗普要向芝加哥派兵 市长拒绝配合</span>
            <span>13:59 俄罗斯驻华大使：上合组织天津峰会将成为重要里程碑</span>
            <span>13:52 2025中国已贡献超</span>
        </div>
        <input
            aria-label="代码搜索"
            placeholder="代码/名称/简拼/功能"
            className="w-[422px] border-l border-[#860000] bg-[#b4b4b4] px-[7px] text-[18px] placeholder:text-black"
        />
    </div>
);

const App = () => {
    return (
        <div className="relative flex min-h-screen flex-col overflow-hidden bg-black font-['Liberation_Sans','Noto_Sans_CJK_SC',sans-serif]">
            <TitleBar />
            <Toolbar />
            <div className="flex">
                <SideNav />
                <Charts />
                <QuotePanel />
            </div>
            <IndexBar />
            <Ticker />
            <div className="flex flex-1 justify-center bg-[#1c2d3a]">
                <span className="w-[240px] bg-[#46545f]" />
            </div>
            <div className="absolute right-[5px] bottom-[5px] flex h-[56px] w-[222px] flex-col items-center bg-white whitespace-nowrap">
                <strong className="text-[30px] leading-[32px] text-[#ff3300]">股票公式指标网</strong>
                <span className="font-['Open_Sans'] text-[24px] leading-[20px] font-semibold text-[#ff9900]">www.gszx.com.cn</span>
            </div>
        </div>
    );
};

export default App;
